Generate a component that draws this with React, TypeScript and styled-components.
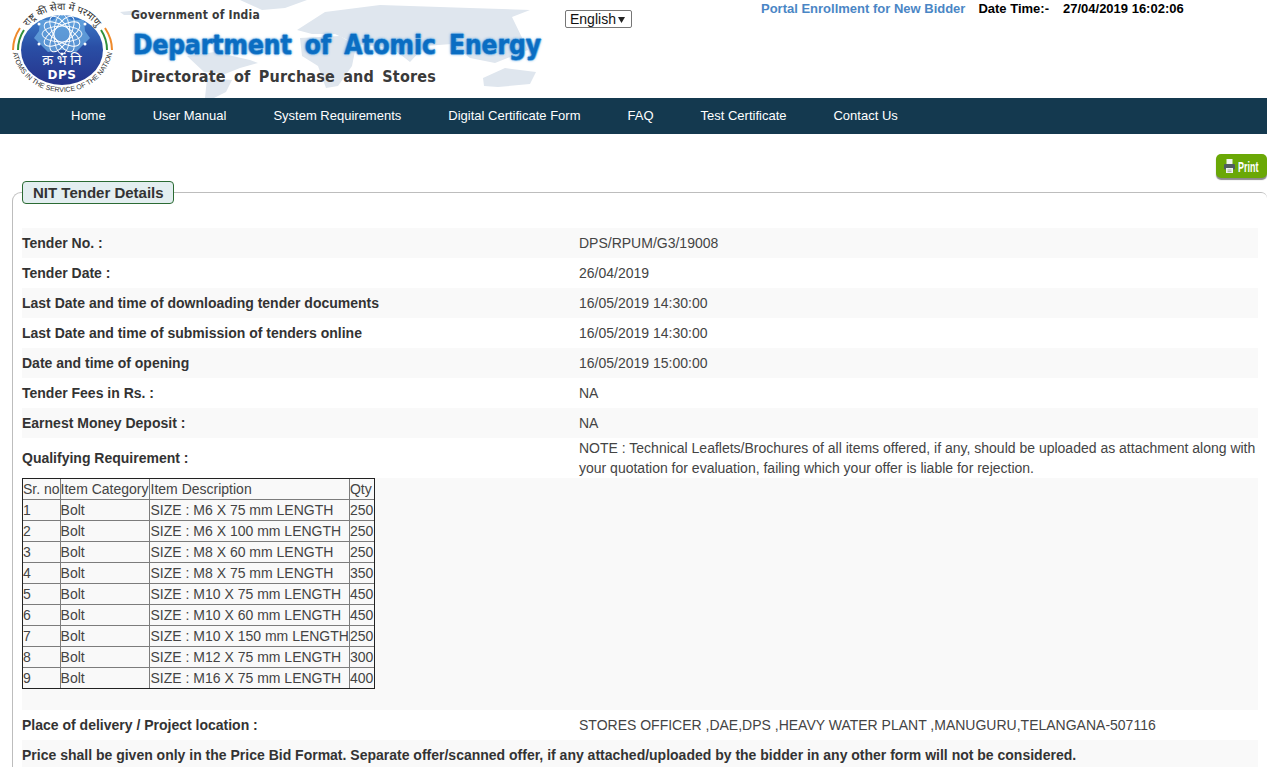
import styled, { createGlobalStyle } from "styled-components";

const GlobalStyle = createGlobalStyle`
  html, body {
    margin: 0;
    height: 767px;
    overflow: hidden;
    background: #fff;
    font-family: "Liberation Sans", Arial, sans-serif;
    font-size: 14px;
    color: #333;
  }
`;

const Header = styled.header`
  display: flex;
  height: 98px;
  background: #fff;
`;

const Banner = styled.div`
  position: relative;
  display: flex;
  flex: 0 0 565px;
  height: 98px;
  overflow: hidden;
`;

const WorldMap = styled.svg`
  position: absolute;
  left: 0;
  top: 0;
`;

const Logo = styled.svg`
  position: relative;
  flex: 0 0 131px;
  height: 98px;
`;

const BannerText = styled.div`
  position: relative;
  display: flex;
  flex-direction: column;
  font-family: "DejaVu Sans Condensed", "DejaVu Sans", Verdana, sans-serif;
  font-weight: 700;
  white-space: nowrap;
`;

const GovLine = styled.div`
  margin-top: 8px;
  font-size: 12px;
  line-height: 15px;
  letter-spacing: 0.2px;
  color: #3a3a3a;
`;

const DeptLine = styled.div`
  margin: 5px 0 0 2px;
  font-size: 26px;
  line-height: 34px;
  letter-spacing: 0;
  word-spacing: 5px;
  color: #0a6dc2;
  -webkit-text-stroke: 0.5px #0a6dc2;
  text-shadow: 1px 0 0 #8cc4ee, -1px 0 0 #8cc4ee, 0 1px 0 #8cc4ee, 0 -1px 0 #8cc4ee,
    0 0 3px #1f78c8;
`;

const DirLine = styled.div`
  margin-top: 5px;
  font-size: 16px;
  line-height: 20px;
  letter-spacing: 0.2px;
  word-spacing: 3px;
  color: #3a3a3a;
`;

const LangSelect = styled.select`
  align-self: flex-start;
  appearance: none;
  box-sizing: border-box;
  width: 67px;
  height: 18px;
  margin-top: 10px;
  padding: 0 0 0 4px;
  background: #fff
    url("data:image/svg+xml,%3Csvg xmlns='http://www.w3.org/2000/svg' width='7' height='7'%3E%3Cpath d='M0 1h7L3.5 7z' fill='%23222'/%3E%3C/svg%3E")
    no-repeat right 6px center;
  border: 1px solid #767676;
  border-radius: 2px;
  font-family: "Liberation Sans", Arial, sans-serif;
  font-size: 14px;
  line-height: 16px;
  color: #111;
`;

const TopInfo = styled.div`
  display: flex;
  align-items: flex-start;
  margin-left: 129px;
  padding-top: 1px;
  font-size: 13px;
  line-height: 16px;
  font-weight: 700;
  white-space: nowrap;
  color: #000;
`;

const EnrollLink = styled.a`
  margin-right: 13px;
  color: #4a86c5;
  text-decoration: none;
`;

const DateStamp = styled.span`
  margin-left: 14px;
`;

const Nav = styled.nav`
  display: flex;
  gap: 47px;
  align-items: center;
  box-sizing: border-box;
  height: 36px;
  padding: 0 0 1px 71px;
  background: #14394f;
`;

const NavLink = styled.a`
  color: #fff;
  font-size: 13px;
  text-decoration: none;
`;

const PrintBar = styled.div`
  display: flex;
  justify-content: flex-end;
  height: 47px;
  padding-top: 20px;
  box-sizing: border-box;
`;

const PrintButton = styled.button`
  display: flex;
  align-items: center;
  gap: 3px;
  width: 51px;
  height: 24px;
  padding: 0 0 0 8px;
  overflow: hidden;
  background: #6aa806;
  border: 0;
  border-radius: 5px;
  box-shadow: 0 2px 1px #8a8a8a;
  color: #fff;
  font-family: "Liberation Sans", Arial, sans-serif;
  font-size: 15px;
  font-weight: 700;
`;

const PrinterGlyph = styled.svg`
  flex: none;
`;

const PrintLabel = styled.span`
  display: inline-block;
  flex: none;
  transform: scaleX(0.6);
  transform-origin: left center;
`;

const Details = styled.fieldset`
  margin: 0 0 0 12px;
  padding: 24px 9px 0;
  min-width: 0;
  border: 1px solid #bdbdbd;
  border-width: 1.5px 0 0 1.5px;
  border-radius: 9px 6px 0 0;
`;

const DetailsLegend = styled.legend`
  box-sizing: border-box;
  height: 23px;
  margin: 0 13px 0 0;
  padding: 0 9.5px 0 10px;
  background: #e3eef0;
  border: 1px solid #2b6b33;
  border-radius: 4px;
  color: #333;
  font-size: 15px;
  font-weight: 700;
  line-height: 21px;
`;

const Row = styled.div<{ $shaded?: boolean; $tall?: boolean }>`
  display: grid;
  grid-template-columns: 557px 1fr;
  align-items: center;
  min-height: ${(p) => (p.$tall ? 40 : 30)}px;
  background: ${(p) => (p.$shaded ? "#f9f9f9" : "#fff")};
  line-height: 20px;
`;

const Label = styled.div`
  font-weight: 700;
`;

const Value = styled.div`
  color: #444;
`;

const FullRow = styled.div`
  height: 30px;
  background: #f9f9f9;
  font-weight: 700;
  line-height: 30px;
  white-space: nowrap;
`;

const TableRow = styled.div`
  height: 232px;
  background: #f9f9f9;
`;

const ItemTable = styled.table`
  border-collapse: collapse;
  outline: 1px solid #222;
  outline-offset: -1px;
  color: #444;
  font-size: 14px;
  line-height: 20px;
  white-space: nowrap;
`;

const Cell = styled.td`
  padding: 0;
  height: 20px;
  border: 1px solid #7c7c7c;

  &:nth-child(3) {
    min-width: 198px;
    padding-left: 1px;
  }

  &:last-child {
    padding-right: 1px;
  }
`;

const items = [
  ["1", "SIZE : M6 X 75 mm LENGTH", "250"],
  ["2", "SIZE : M6 X 100 mm LENGTH", "250"],
  ["3", "SIZE : M8 X 60 mm LENGTH", "250"],
  ["4", "SIZE : M8 X 75 mm LENGTH", "350"],
  ["5", "SIZE : M10 X 75 mm LENGTH", "450"],
  ["6", "SIZE : M10 X 60 mm LENGTH", "450"],
  ["7", "SIZE : M10 X 150 mm LENGTH", "250"],
  ["8", "SIZE : M12 X 75 mm LENGTH", "300"],
  ["9", "SIZE : M16 X 75 mm LENGTH", "400"],
];

const navLinks = [
  "Home",
  "User Manual",
  "System Requirements",
  "Digital Certificate Form",
  "FAQ",
  "Test Certificate",
  "Contact Us",
];

const topRows: [string, string][] = [
  ["Tender No. :", "DPS/RPUM/G3/19008"],
  ["Tender Date :", "26/04/2019"],
  ["Last Date and time of downloading tender documents", "16/05/2019 14:30:00"],
  ["Last Date and time of submission of tenders online", "16/05/2019 14:30:00"],
  ["Date and time of opening", "16/05/2019 15:00:00"],
  ["Tender Fees in Rs. :", "NA"],
  ["Earnest Money Deposit :", "NA"],
];

function DpsLogo() {
  return (
    <Logo viewBox="0 0 131 98">
      <defs>
        <path id="ringTop" d="M22 42 C26 20 44 10 62 10 C80 10 98 20 103 42" />
        <path id="ringBottom" d="M13 54 C19 78 40 92 62 92 C85 92 106 78 112 54" />
        <linearGradient id="discFill" x1="0" y1="0" x2="0" y2="1">
          <stop offset="0" stopColor="#3d7ecb" />
          <stop offset="0.45" stopColor="#2a4fa6" />
          <stop offset="1" stopColor="#26348c" />
        </linearGradient>
      </defs>
      <ellipse cx="62" cy="50" rx="41" ry="35" fill="url(#discFill)" />
      <path
        d="M62 15 L72 20 L84 20 L85 31 L90 38 L82 46 L76 52 L62 50 L48 52 L42 46 L34 38 L39 31 L40 20 L52 20Z"
        fill="#6fb0e6"
        opacity="0.7"
      />
      <g fill="none" stroke="#fff" strokeWidth="0.9">
        <ellipse cx="62" cy="34" rx="8" ry="20" />
        <ellipse cx="62" cy="34" rx="8" ry="20" transform="rotate(60 62 34)" />
        <ellipse cx="62" cy="34" rx="8" ry="20" transform="rotate(120 62 34)" />
        <ellipse cx="62" cy="34" rx="8" ry="20" transform="rotate(30 62 34)" />
        <ellipse cx="62" cy="34" rx="8" ry="20" transform="rotate(90 62 34)" />
        <ellipse cx="62" cy="34" rx="8" ry="20" transform="rotate(150 62 34)" />
      </g>
      <g fill="#fff">
        <circle cx="62" cy="14" r="1.5" />
        <circle cx="62" cy="54" r="1.5" />
        <circle cx="39" cy="24" r="1.5" />
        <circle cx="85" cy="24" r="1.5" />
        <circle cx="39" cy="44" r="1.5" />
        <circle cx="85" cy="44" r="1.5" />
      </g>
      <text x="62" y="65" textAnchor="middle" fontSize="14" fill="#fff" fontFamily="'Noto Sans', 'DejaVu Sans', sans-serif">क्र भं नि</text>
      <text x="62" y="79" textAnchor="middle" fontSize="12" fontWeight="700" letterSpacing="0.5" fill="#fff" fontFamily="'DejaVu Sans', sans-serif">DPS</text>
      <text fontSize="10" fill="#333" fontFamily="'Noto Sans', 'DejaVu Sans', sans-serif">
        <textPath href="#ringTop" startOffset="50%" textAnchor="middle">राष्ट्र की सेवा में परमाणु</textPath>
      </text>
      <text fontSize="7" fill="#333" fontFamily="'Liberation Sans', sans-serif">
        <textPath href="#ringBottom" startOffset="50%" textAnchor="middle">ATOMS IN THE SERVICE OF THE NATION</textPath>
      </text>
      <g fill="none" strokeWidth="2">
        <path d="M13 50 C13 41 16 34 20 28" stroke="#ef8a2b" />
        <path d="M18 50 C18 42 20 36 24 30" stroke="#2f8f3a" />
        <path d="M112 50 C112 41 109 34 105 28" stroke="#ef8a2b" />
        <path d="M107 50 C107 42 105 36 101 30" stroke="#2f8f3a" />
      </g>
    </Logo>
  );
}

function MapBackdrop() {
  return (
    <WorldMap width="565" height="98" viewBox="0 0 565 98">
      <g fill="#dfe6ee">
        <path d="M120 12 L140 10 L142 15 L124 15Z" />
        <path d="M240 0 L307 0 L285 8 L262 10Z" />
        <path d="M297 30 L325 12 L380 5 L470 8 L530 10 L512 17 L528 50 L495 63 L470 58 L452 44 L425 46 L410 62 L392 48 L356 44 L335 34 L312 34Z" />
        <path d="M300 38 L340 36 L356 46 L352 66 L338 86 L326 88 L318 66 L302 56Z" />
        <path d="M187 56 L215 52 L250 60 L258 63 L240 68 L225 74 L204 72Z" />
        <path d="M207 78 L232 80 L226 92 L214 98 L205 98Z" />
        <path d="M483 78 L505 68 L536 72 L530 84 L498 87 L484 86Z" />
      </g>
    </WorldMap>
  );
}

function PrinterIcon() {
  return (
    <PrinterGlyph width="11" height="14" viewBox="0 0 11 14">
      <rect x="2.5" y="0" width="6" height="5" fill="#f0f4f0" />
      <rect x="0" y="5" width="11" height="5.5" rx="1.2" fill="#4f5b62" />
      <rect x="2" y="9" width="7" height="5" fill="#f0f4f0" />
      <path d="M3.5 11h4M3.5 12.6h4" stroke="#8a8f8a" strokeWidth="0.7" />
    </PrinterGlyph>
  );
}

export default function App() {
  return (
    <>
      <GlobalStyle />
      <Header>
        <Banner>
          <MapBackdrop />
          <DpsLogo />
          <BannerText>
            <GovLine>Government of India</GovLine>
            <DeptLine>Department of Atomic Energy</DeptLine>
            <DirLine>Directorate of Purchase and Stores</DirLine>
          </BannerText>
        </Banner>
        <LangSelect defaultValue="English">
          <option>English</option>
        </LangSelect>
        <TopInfo>
          <EnrollLink href="#">Portal Enrollment for New Bidder</EnrollLink>
          <span>Date Time:-</span>
          <DateStamp>27/04/2019 16:02:06</DateStamp>
        </TopInfo>
      </Header>
      <Nav>
        {navLinks.map((link) => (
          <NavLink key={link} href="#">
            {link}
          </NavLink>
        ))}
      </Nav>
      <PrintBar>
        <PrintButton>
          <PrinterIcon />
          <PrintLabel>Print</PrintLabel>
        </PrintButton>
      </PrintBar>
      <Details>
        <DetailsLegend>NIT Tender Details</DetailsLegend>
        {topRows.map(([label, value], i) => (
          <Row key={label} $shaded={i % 2 === 0}>
            <Label>{label}</Label>
            <Value>{value}</Value>
          </Row>
        ))}
        <Row $tall>
          <Label>Qualifying Requirement :</Label>
          <Value>
            NOTE : Technical Leaflets/Brochures of all items offered, if any, should be uploaded as
            attachment along with your quotation for evaluation, failing which your offer is liable
            for rejection.
          </Value>
        </Row>
        <TableRow>
          <ItemTable>
            <tbody>
              <tr>
                <Cell>Sr. no</Cell>
                <Cell>Item Category</Cell>
                <Cell>Item Description</Cell>
                <Cell>Qty</Cell>
              </tr>
              {items.map(([no, desc, qty]) => (
                <tr key={no}>
                  <Cell>{no}</Cell>
                  <Cell>Bolt</Cell>
                  <Cell>{desc}</Cell>
                  <Cell>{qty}</Cell>
                </tr>
              ))}
            </tbody>
          </ItemTable>
        </TableRow>
        <Row>
          <Label>Place of delivery / Project location :</Label>
          <Value>STORES OFFICER ,DAE,DPS ,HEAVY WATER PLANT ,MANUGURU,TELANGANA-507116</Value>
        </Row>
        <FullRow>
          Price shall be given only in the Price Bid Format. Separate offer/scanned offer, if any
          attached/uploaded by the bidder in any other form will not be considered.
        </FullRow>
      </Details>
    </>
  );
}
